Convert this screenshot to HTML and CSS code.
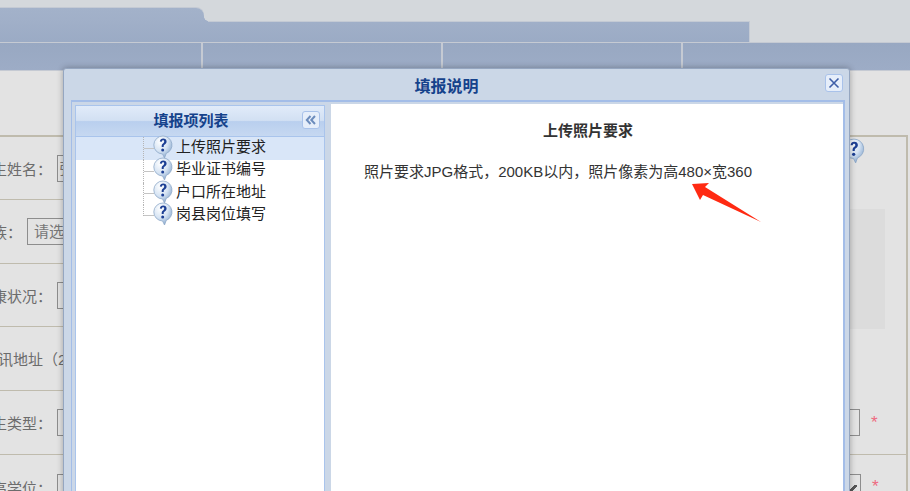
FILE: index.html
```html
<!DOCTYPE html>
<html lang="zh">
<head>
<meta charset="utf-8">
<title>填报说明</title>
<link rel="stylesheet" href="styles.css">
</head>
<body>
<div class="page">
  <header class="masthead">
    <div class="tab-strip"><div class="tab"></div></div>
    <div class="band"></div>
    <nav class="nav">
      <div class="nav-cell"></div>
      <div class="nav-cell"></div>
      <div class="nav-cell"></div>
      <div class="nav-cell"></div>
    </nav>
  </header>

  <main class="sheet">
    <div class="sheet-top">
      <div class="fields">
        <div class="row row-tall">
          <span class="label">学生姓名：</span>
          <span class="input input-name">张三</span>
        </div>
        <div class="row">
          <span class="label label-short">民族：</span>
          <span class="input">请选择</span>
        </div>
        <div class="row row-short">
          <span class="label">健康状况：</span>
          <span class="input"></span>
        </div>
        <div class="row">
          <span class="label label-long">通讯地址（20字以内）</span>
        </div>
      </div>
      <aside class="side">
        <svg class="help" viewBox="0 0 20 24" width="22" height="26" aria-hidden="true"><use href="#q"></use></svg>
        <div class="photo"></div>
      </aside>
    </div>
    <div class="row row-wide">
      <span class="label">考生类型：</span>
      <span class="input input-wide"></span>
      <span class="star">*</span>
    </div>
    <div class="row row-wide row-end">
      <span class="label">最高学位：</span>
      <span class="input input-wide input-select"><i class="caret"></i></span>
      <span class="star">*</span>
    </div>
  </main>

  <section class="modal">
    <div class="modal-head">
      <h1 class="modal-title">填报说明</h1>
      <button class="close" type="button" aria-label="关闭">
        <svg viewBox="0 0 12 12" width="12" height="12" aria-hidden="true"><path d="M1.5 1.5 10.5 10.5M10.5 1.5 1.5 10.5" class="close-x"></path></svg>
      </button>
    </div>
    <div class="modal-body">
      <div class="list-panel">
        <div class="list-head">
          <span class="list-title">填报项列表</span>
          <button class="collapse" type="button" aria-label="收起">
            <svg viewBox="0 0 12 10" width="12" height="10" aria-hidden="true"><path d="M5.5 1 1.800 5 5.500 9M10 1 6.300 5 10 9" class="collapse-x"></path></svg>
          </button>
        </div>
        <ul class="tree">
          <li class="tree-row is-selected"><svg class="q-icon" viewBox="0 0 20 24" width="20" height="24" aria-hidden="true"><use href="#q"></use></svg>上传照片要求</li>
          <li class="tree-row"><svg class="q-icon" viewBox="0 0 20 24" width="20" height="24" aria-hidden="true"><use href="#q"></use></svg>毕业证书编号</li>
          <li class="tree-row"><svg class="q-icon" viewBox="0 0 20 24" width="20" height="24" aria-hidden="true"><use href="#q"></use></svg>户口所在地址</li>
          <li class="tree-row is-last"><svg class="q-icon" viewBox="0 0 20 24" width="20" height="24" aria-hidden="true"><use href="#q"></use></svg>岗县岗位填写</li>
        </ul>
      </div>
      <article class="content">
        <h2 class="content-title">上传照片要求</h2>
        <p class="content-text">照片要求JPG格式，200KB以内，照片像素为高480×宽360</p>
      </article>
    </div>
  </section>

  <svg class="arrow" viewBox="0 0 80 50" width="80" height="50" aria-hidden="true">
    <polygon points="2,4 19,3 15,7 71,42 13,15 10,20" class="arrow-fill"></polygon>
  </svg>
</div>

<svg class="defs" width="0" height="0" aria-hidden="true">
  <defs>
    <radialGradient id="qg" cx="35%" cy="25%" r="80%">
      <stop offset="0" stop-color="#ffffff"></stop>
      <stop offset="0.55" stop-color="#d5e3f3"></stop>
      <stop offset="1" stop-color="#86a6cc"></stop>
    </radialGradient>
    <symbol id="q" viewBox="0 0 20 24">
      <path d="M10 1a9 9 0 0 1 3.200 17.400L11.500 23 9.600 19A9 9 0 0 1 10 1z" fill="url(#qg)" stroke="#8fa9c9" stroke-width="0.8"></path>
      <path d="M6.800 6.600C7 4.400 8.400 3.400 10.200 3.400c2 0 3.400 1.100 3.400 3 0 1.500-.9 2.300-1.900 3-.8.6-1 1-1 2v.5H8.700v-.8c0-1.300.4-2 1.300-2.700.8-.6 1.200-1 1.200-1.900 0-.8-.4-1.300-1.100-1.300-.8 0-1.200.6-1.300 1.500z" fill="#1c3f94"></path>
      <circle cx="9.700" cy="15" r="1.500" fill="#1c3f94"></circle>
    </symbol>
  </defs>
</svg>
</body>
</html>
```
FILE: styles.css
```css
* { box-sizing: border-box; }

html, body {
  margin: 0;
  padding: 0;
  height: 100%;
  overflow: hidden;
}

body {
  background: #e3e3e3;
  font-family: "Liberation Sans", "Noto Sans CJK SC", sans-serif;
  font-size: 15px;
}

.page {
  position: relative;
  width: 910px;
  height: 491px;
  overflow: hidden;
}

.defs { display: block; }

/* page behind the mask */
.masthead { background: #d4d8dc; }

.tab-strip {
  height: 22px;
  padding-top: 8px;
}

.tab {
  position: relative;
  z-index: 1;
  width: 204px;
  height: 15px;
  background: linear-gradient(#a3b2ca, #a0afc8);
  border-top-right-radius: 8px;
  box-shadow: 0 -1px 0 #c4cad4;
}

.tab::after {
  content: "";
  position: absolute;
  left: 100%;
  bottom: 1px;
  width: 4px;
  height: 5px;
  background: radial-gradient(circle at 100% 0, transparent 3.500px, #a0afc8 4px);
}

.band {
  width: 750px;
  height: 20px;
  background: linear-gradient(#a0afc8, #9babc5);
  border-right: 1px solid #c4cad4;
  box-shadow: 0 -1px 0 #c4cad4;
}

.nav {
  display: grid;
  grid-template-columns: 203px 240px 240px 1fr;
  height: 29px;
  background: #c5cad3;
  padding: 1px 0 1px;
}

.nav-cell {
  background: linear-gradient(#98a8c2, #9dacc6);
  border-right: 2px solid #c5cad3;
}

.nav-cell:last-child { border-right: 0; }

.sheet {
  width: 908px;
  margin-top: 64px;
  border-top: 2px solid #bfbbad;
  border-right: 2px solid #bfbbad;
  color: #6c6c6c;
}

.sheet-top { display: flex; }

.fields { width: 840px; }

.side {
  flex: 1;
  padding-top: 1px;
  position: relative;
}

.help {
  display: block;
  margin-left: 3px;
}

.photo {
  width: 35px;
  height: 120px;
  margin: 45px 0 0 10px;
  background: #dcdcdc;
}

.row {
  display: flex;
  align-items: center;
  height: 64px;
  border-bottom: 1px solid #bfbbad;
  margin-left: -23px;
  white-space: nowrap;
}

.row-tall { height: 63px; }
.row-short { height: 63px; }
.row-end { border-bottom: 0; }

.label {
  flex: none;
  width: 80px;
  font-family: "Liberation Sans", "Noto Sans CJK TC", sans-serif;
}

.label-short { width: 50px; }

.label-long { padding-left: 6px; }

.input {
  flex: 1;
  height: 27px;
  line-height: 25px;
  padding-left: 6px;
  border: 1px solid #8d8d8d;
  color: #777;
}

.input-name { padding-left: 1px; }

.input-wide { flex: none; width: 803px; }

.input-select { position: relative; width: 804px; }

.caret {
  position: absolute;
  right: 3px;
  top: 10px;
  width: 8px;
  height: 7px;
  background: linear-gradient(135deg, transparent 38%, #555 38%, #555 62%, transparent 62%);
}

.star {
  margin-left: 11px;
  color: #ee6a80;
  font-size: 17px;
}

/* dialog */
.modal {
  position: absolute;
  left: 63px;
  top: 68px;
  width: 787px;
  height: 440px;
  display: flex;
  flex-direction: column;
  background: #cbd7e7;
  border: 1px solid #95a6c0;
  border-radius: 3px 3px 0 0;
  box-shadow: 0 0 6px rgba(0, 0, 0, 0.3);
}

.modal-head {
  position: relative;
  flex: none;
  height: 31px;
  display: flex;
  align-items: center;
  justify-content: center;
}

.modal-title {
  margin: 1px 20px 0 0;
  font-size: 16px;
  font-weight: bold;
  color: #15428b;
}

.close {
  position: absolute;
  right: 6px;
  top: 5px;
  width: 18px;
  height: 18px;
  padding: 0;
  display: flex;
  align-items: center;
  justify-content: center;
  background: #e6eefa;
  border: 1px solid #a9c2ea;
  border-radius: 3px;
}

.close-x {
  fill: none;
  stroke: #3f5fa8;
  stroke-width: 1.6;
}

.modal-body {
  flex: 1;
  display: flex;
  margin: 0 4px 0 7px;
  padding: 3px 0 0 3px;
  border: 1px solid #a3bde8;
  border-width: 2px 2px 0 1px;
  gap: 6px;
}

.list-panel {
  flex: none;
  width: 250px;
  background: #fff;
  border: 1px solid #a9c4ec;
  border-width: 1px 1px 0;
}

.list-head {
  position: relative;
  height: 31px;
  display: flex;
  align-items: center;
  justify-content: center;
  background: linear-gradient(#e1ebf9 0, #d2e0f3 48%, #b9cfee 52%, #c6d8f1 100%);
  border-bottom: 1px solid #a9c4ec;
}

.list-title {
  margin: 0 18px 4px 0;
  font-weight: bold;
  color: #15428b;
}

.collapse {
  position: absolute;
  right: 4px;
  top: 5px;
  width: 18px;
  height: 18px;
  padding: 0;
  display: flex;
  align-items: center;
  justify-content: center;
  background: #e6eefa;
  border: 1px solid #a9c2ea;
  border-radius: 3px;
}

.collapse-x {
  fill: none;
  stroke: #6c8cbc;
  stroke-width: 2;
}

.tree {
  margin: 0;
  padding: 0;
  list-style: none;
  color: #222;
}

.tree-row {
  position: relative;
  display: flex;
  align-items: center;
  height: 22.5px;
  padding: 0 0 7px 77px;
}

.tree-row::before {
  content: "";
  position: absolute;
  left: 67px;
  top: 0;
  bottom: 0;
  width: 10px;
  border-left: 1px dotted #b5b5b5;
  background: linear-gradient(#c4c4c4, #c4c4c4) no-repeat 0 50% / 100% 1px;
}

.tree-row.is-last::before {
  bottom: 50%;
  background-position: 0 100%;
}

.is-selected {
  height: 23px;
  background: #d9e6f8;
}

.q-icon {
  flex: none;
  margin: 3px 3px 0 0;
  position: relative;
}

.content {
  flex: 1;
  margin-top: -1px;
  padding: 17px 0 0 33px;
  background: #fff;
  color: #333;
}

.content-title {
  margin: 0 0 0 -31px;
  font-size: 15px;
  line-height: 20px;
  text-align: center;
  font-weight: bold;
}

.content-text {
  margin: 20px 0 0;
  line-height: 22px;
}

.arrow {
  position: absolute;
  left: 690px;
  top: 180px;
}

.arrow-fill { fill: #ff2a12; }
```
